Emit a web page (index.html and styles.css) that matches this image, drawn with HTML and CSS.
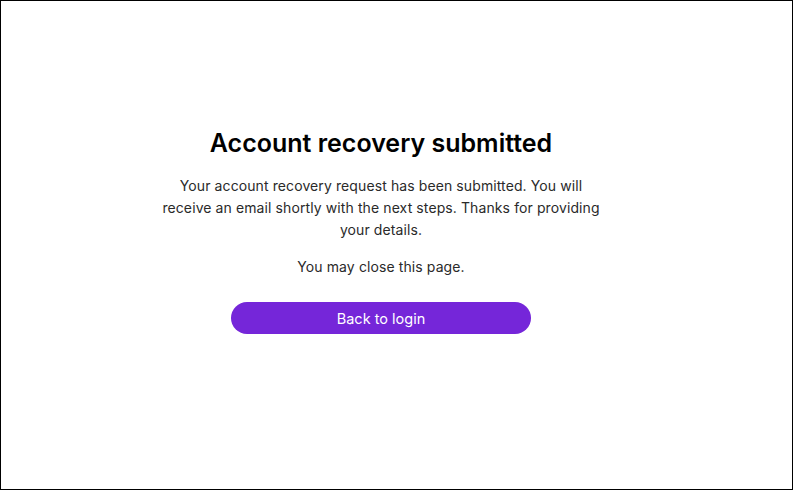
FILE: index.html
```html
<!DOCTYPE html>
<html lang="en">
<head>
<meta charset="utf-8">
<title>Account recovery submitted</title>
<link rel="stylesheet" href="styles.css">
</head>
<body>
<main class="frame">
  <section class="card">
    <h1 class="title">Account recovery submitted</h1>
    <p class="text">Your account recovery request has been submitted. You will receive an email shortly with the next steps. Thanks for providing your details.</p>
    <p class="text note">You may close this page.</p>
    <button class="btn" type="button">Back to login</button>
  </section>
</main>
</body>
</html>
```
FILE: styles.css
```css
* { box-sizing: border-box; }
html, body { margin: 0; height: 100%; }
body {
  font-family: Inter, "Noto Sans", sans-serif;
  background: #fff;
  color: #222;
}
.frame {
  height: 490px;
  border: 1px solid #000;
  display: flex;
  justify-content: center;
  padding-top: 126px;
  padding-right: 31px;
}
.card {
  width: 446px;
  display: flex;
  flex-direction: column;
  align-items: center;
  text-align: center;
}
.title {
  margin: 0 0 16px;
  font-size: 25px;
  font-weight: 600;
  line-height: 32px;
  color: #000;
}
.text {
  margin: 0;
  font-size: 14px;
  line-height: 22px;
  letter-spacing: 0.1px;
  color: #2a2a2a;
}
.note { margin-top: 15px; }
.btn {
  margin-top: 24px;
  width: 300px;
  height: 32px;
  border: none;
  border-radius: 16px;
  background: #7526d9;
  color: #fff;
  font-family: inherit;
  font-size: 14.5px;
  cursor: pointer;
}
```
